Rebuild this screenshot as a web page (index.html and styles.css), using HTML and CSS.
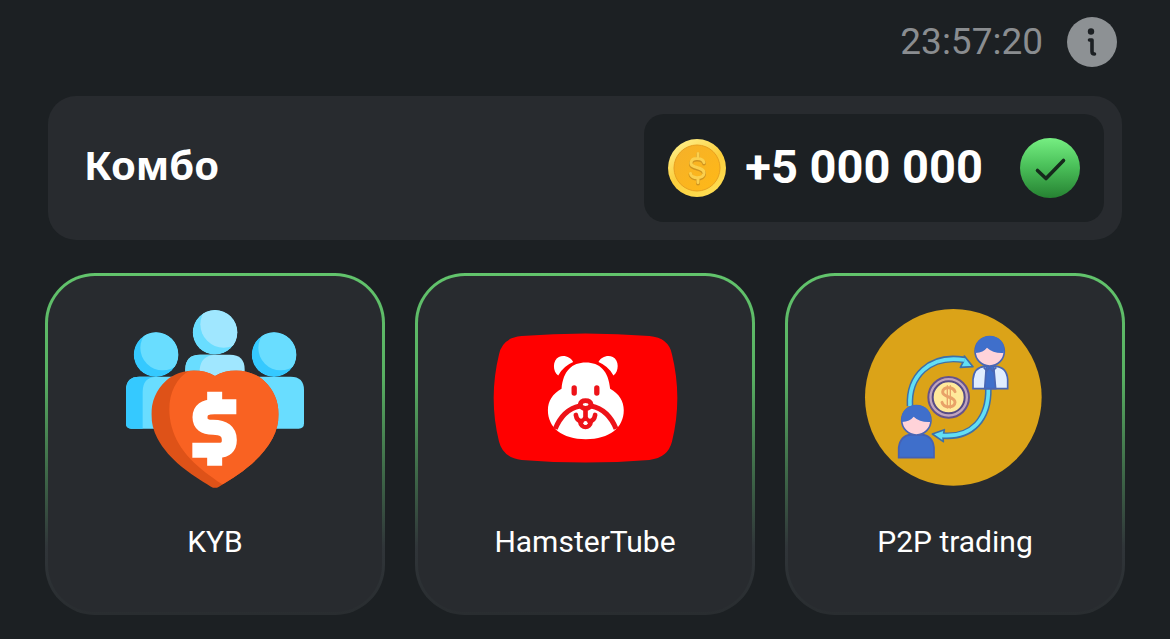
FILE: index.html
```html
<!DOCTYPE html>
<html lang="ru">
<head>
<meta charset="utf-8">
<meta name="viewport" content="width=device-width, initial-scale=1">
<title>Комбо</title>
<link rel="stylesheet" href="styles.css">
</head>
<body>
<main class="page">
  <header class="topbar">
    <time class="timer">23:57:20</time>
    <button class="info" type="button" aria-label="Info">
      <svg viewBox="0 0 50 50" aria-hidden="true">
        <circle cx="24" cy="14.500" r="3.200" fill="#1c2023"/>
        <path d="M22.500 23H25V34.500Q25 37 27.500 37" fill="none" stroke="#1c2023" stroke-width="3.600" stroke-linecap="round" stroke-linejoin="round"/>
      </svg>
    </button>
  </header>

  <section class="combo">
    <h1 class="combo-title">Комбо</h1>
    <div class="reward">
      <svg class="coin" viewBox="0 0 58 58" aria-hidden="true">
        <defs>
          <linearGradient id="coinRim" x1="0.2" y1="0" x2="0.8" y2="1">
            <stop offset="0" stop-color="#fff08a"/>
            <stop offset="0.5" stop-color="#fbce3c"/>
            <stop offset="1" stop-color="#ffdf55"/>
          </linearGradient>
          <linearGradient id="coinFace" x1="0" y1="0" x2="1" y2="1">
            <stop offset="0" stop-color="#f5b02a"/>
            <stop offset="1" stop-color="#ffb916"/>
          </linearGradient>
        </defs>
        <circle cx="29" cy="29" r="29" fill="url(#coinRim)"/>
        <circle cx="29" cy="29" r="23" fill="url(#coinFace)" stroke="#e8a020" stroke-width="1"/>
        <g fill="none" stroke-linecap="round">
          <path d="M36 24.500C35 20 24 18.500 23 24.500C22 31 37 28 36 35.500C35 41 23 41 22.500 35.500M30 15.500V20.500M30 39.500V44.500" stroke="#cf9420" stroke-width="4"/>
          <path d="M36 23.500C35 19 24 17.500 23 23.500C22 30 37 27 36 34.500C35 40 23 40 22.500 34.500M30 14.500V19.500M30 38.500V43.500" stroke="#fbd04e" stroke-width="3"/>
        </g>
      </svg>
      <span class="amount">+5 000 000</span>
      <svg class="done" viewBox="0 0 60 60" role="img" aria-label="Done">
        <defs>
          <linearGradient id="doneFill" x1="0" y1="0" x2="0" y2="1">
            <stop offset="0" stop-color="#76ee82"/>
            <stop offset="0.45" stop-color="#4cc25b"/>
            <stop offset="1" stop-color="#268232"/>
          </linearGradient>
        </defs>
        <circle cx="30" cy="30" r="30" fill="url(#doneFill)"/>
        <path d="M17.500 32.500L26 40.500L43.500 22.500" fill="none" stroke="#16291c" stroke-width="3.600" stroke-linecap="round" stroke-linejoin="round"/>
      </svg>
    </div>
  </section>

  <section class="cards">
    <article class="card">
      <svg class="card-icon" viewBox="33 30 534 534" aria-hidden="true">
        <defs>
          <clipPath id="headLeft"><circle cx="123" cy="164" r="67"/></clipPath>
          <clipPath id="headMid"><circle cx="300" cy="97" r="67"/></clipPath>
          <clipPath id="headRight"><circle cx="477" cy="164" r="67"/></clipPath>
          <clipPath id="heart"><path d="M300 228C345 202 407 207 447 242C496 286 503 358 473 415C438 481 372 524 312 560Q300 567 288 560C228 524 162 481 127 415C97 358 104 286 153 242C193 207 255 202 300 228Z"/></clipPath>
        </defs>
        <path d="M33 270Q33 230 73 230H190V386H49Q33 386 33 370Z" fill="#69ddff"/>
        <path d="M33 270Q33 230 73 230H123Q83 232 83 275V386H49Q33 386 33 370Z" fill="#35c9ff"/>
        <path d="M410 230H527Q567 230 567 270V370Q567 386 551 386H410Z" fill="#69ddff"/>
        <g clip-path="url(#headLeft)"><circle cx="123" cy="164" r="67" fill="#35c9ff"/><circle cx="143" cy="144" r="67" fill="#69ddff"/></g>
        <g clip-path="url(#headRight)"><circle cx="477" cy="164" r="67" fill="#35c9ff"/><circle cx="497" cy="144" r="67" fill="#69ddff"/></g>
        <path d="M211 240V208Q211 164 255 164H345Q389 164 389 208V240Z" fill="#a0e7ff"/>
        <path d="M211 240V208Q211 164 255 164H300Q258 166 254 208V240Z" fill="#69ddff"/>
        <g clip-path="url(#headMid)"><circle cx="300" cy="97" r="67" fill="#69ddff"/><circle cx="326" cy="73" r="70" fill="#a0e7ff"/></g>
        <g clip-path="url(#heart)">
          <rect x="90" y="200" width="420" height="370" fill="#de5218"/>
          <path d="M232 207C170 236 151 310 170 380C190 455 250 505 322 553L520 570V190H300Z" fill="#f96222"/>
        </g>
        <g fill="none" stroke="#fff">
          <path d="M364 320H298Q255 320 255 352Q255 382 294 382Q343 382 343 420Q343 451 310 451H232" stroke-width="45"/>
          <path d="M299 275V315M299 455V497" stroke-width="45"/>
        </g>
      </svg>
      <h2 class="card-label">KYB</h2>
    </article>

    <article class="card">
      <svg class="card-icon card-icon-wide" viewBox="24 42 556 388" aria-hidden="true">
        <path d="M110 47Q302 31 494 47Q552 52 562 102Q594 233 562 364Q550 413 494 419Q302 435 110 419Q54 413 42 364Q10 233 42 102Q52 52 110 47Z" fill="#f00"/>
        <path d="M220 165C203 155 202 119 222 110C238 102 258 111 265 125Q236 137 220 165ZM386 165C403 155 404 119 384 110C368 102 348 111 341 125Q370 137 386 165Z" fill="#fff"/>
        <path d="M303 126C345 126 371 151 376 205C403 220 417 242 417 270C417 322 375 357 303 357C231 357 189 322 189 270C189 242 203 220 230 205C235 151 261 126 303 126Z" fill="#fff"/>
        <g fill="none" stroke="#ed1218" stroke-linecap="round">
          <path d="M268 203V218M336 203V218" stroke-width="16"/>
          <path d="M211 326C227 286 253 264 285 257M394 326C378 286 352 264 319 257" stroke-width="15" stroke-linecap="butt"/>
          <path d="M286 252Q288 241 302 241Q317 241 319 252Q316 264 302 264Q289 264 286 252Z" fill="#fff" stroke-width="14"/>
          <path d="M302 270V288M273 284C277 308 298 306 302 290C306 306 327 308 331 284" stroke-width="14"/>
          <path d="M286 304C288 325 316 325 318 304" stroke-width="14"/>
        </g>
        <circle cx="302" cy="308" r="6" fill="#fff"/>
      </svg>
      <h2 class="card-label">HamsterTube</h2>
    </article>

    <article class="card">
      <svg class="card-icon" viewBox="33 30 534 534" aria-hidden="true">
        <circle cx="295" cy="292" r="265" fill="#dba318"/>
        <g fill="none">
          <path d="M165 318C160 230 222 163 325 179" stroke="#3d70a8" stroke-width="20"/>
          <path d="M400 264C402 356 352 414 264 407" stroke="#3d70a8" stroke-width="20"/>
        </g>
        <g fill="#62dff5" stroke="#3d70a8" stroke-width="5" stroke-linejoin="round">
          <path d="M328 168L354 200L316 202L325 185Z"/>
          <path d="M268 389L232 402L265 425L264 411Z"/>
        </g>
        <g fill="none" stroke="#62dff5" stroke-width="11">
          <path d="M165 318C160 230 222 163 329 180"/>
          <path d="M400 264C402 356 352 414 258 406"/>
        </g>
        <circle cx="281" cy="292" r="61" fill="#c1a5bd" stroke="#66538c" stroke-width="6"/>
        <circle cx="281" cy="292" r="48" fill="#ffe99b" stroke="#564b85" stroke-width="6"/>
        <g fill="none" stroke="#e8a168" stroke-linecap="round">
          <path d="M300 275C295 259 263 259 263 276C263 294 300 288 300 307C300 325 266 325 261 307" stroke-width="9"/>
          <path d="M277 257V324M286 257V324" stroke-width="4"/>
        </g>
        <g stroke="#4966b4" stroke-width="5">
          <path d="M354 266V238Q357 201 390 199H421Q455 201 458 238V266Z" fill="#e0edff"/>
          <path d="M394 198H416L422 266H389Z" fill="#3f6fcb"/>
          <path d="M386 202L396 213L404 202L413 213L424 202" fill="none"/>
          <circle cx="404" cy="154" r="44" fill="#ffd3d9"/>
        </g>
        <path d="M362 159C356 128 378 108 404 108C433 108 453 130 446 159Q415 161 396 143Q385 157 362 159Z" fill="#3f6fcb"/>
        <path d="M131 473V443Q136 406 169 404H199Q233 406 237 443V473Z" fill="#3f6fcb" stroke="#4661b2" stroke-width="5"/>
        <circle cx="184" cy="361" r="44" fill="#ffd3d9" stroke="#4966b4" stroke-width="5"/>
        <path d="M141 366C135 335 158 315 184 315C213 315 233 337 226 366Q195 368 176 350Q165 364 141 366Z" fill="#3f6fcb"/>
      </svg>
      <h2 class="card-label">P2P trading</h2>
    </article>
  </section>
</main>
</body>
</html>
```
FILE: styles.css
```css
* {
  box-sizing: border-box;
}

body {
  margin: 0;
  background: #1c2023;
  color: #fff;
  font-family: Roboto, "Liberation Sans", sans-serif;
}

h1,
h2 {
  margin: 0;
}

svg {
  display: block;
}

.page {
  padding: 17px 45px 24px;
}

.topbar {
  display: flex;
  align-items: center;
  justify-content: flex-end;
  gap: 24px;
  padding-right: 8px;
}

.timer {
  color: #8a8d90;
  font-size: 37px;
  line-height: 50px;
}

.info {
  width: 50px;
  height: 50px;
  padding: 0;
  border: 0;
  border-radius: 50%;
  background: #8d9194;
}

.combo {
  display: flex;
  align-items: center;
  justify-content: space-between;
  margin: 29px 3px 33px;
  padding: 18px 18px 18px 36px;
  border-radius: 28px;
  background: #282b2f;
}

.combo-title {
  padding-bottom: 6px;
  font-family: "Noto Sans", "Open Sans", sans-serif;
  font-size: 40px;
  font-weight: 700;
  line-height: 56px;
}

.reward {
  display: flex;
  align-items: center;
  padding: 24px;
  border-radius: 20px;
  background: #1c2023;
}

.coin {
  width: 58px;
  height: 58px;
}

.amount {
  margin: 0 37px 0 19px;
  padding-bottom: 2px;
  font-size: 47px;
  font-weight: 700;
  line-height: 56px;
  white-space: nowrap;
}

.done {
  width: 60px;
  height: 60px;
}

.cards {
  display: grid;
  grid-template-columns: repeat(3, 1fr);
  gap: 30px;
}

.card {
  display: flex;
  flex-direction: column;
  align-items: center;
  gap: 36px;
  padding: 34px 16px 52px;
  border: 3px solid transparent;
  border-radius: 50px;
  background:
    linear-gradient(#282b2f, #282b2f) padding-box,
    linear-gradient(#62c46c 0%, #58b062 30%, #3d6547 60%, #303539 80%, #292d30 100%) border-box;
}

.card-icon {
  width: 178px;
  height: 178px;
  overflow: visible;
}

.card-icon-wide {
  width: 185px;
}

.card-label {
  font-size: 30px;
  font-weight: 400;
  line-height: 36px;
}
```
